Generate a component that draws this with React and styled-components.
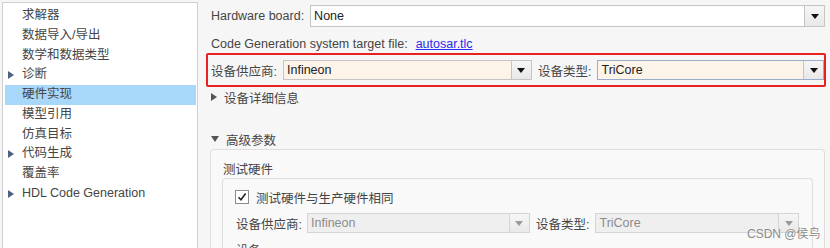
import styled, { createGlobalStyle } from "styled-components";

const GlobalStyle = createGlobalStyle`
  html, body {
    margin: 0;
    padding: 0;
    background: #f6f6f6;
  }
  body {
    font-family: "Liberation Sans", "Noto Sans CJK SC", Arial, sans-serif;
    font-size: 12.5px;
    color: #454545;
  }
`;

const Page = styled.div`
  position: relative;
  display: flex;
  width: 830px;
  height: 248px;
  overflow: hidden;
  background: #f6f6f6;
`;

const Tree = styled.div`
  width: 196px;
  margin: 2px 0 0 2px;
  padding: 3px 1px 0 2px;
  background: #fff;
  border: 1px solid #cfcfcf;
  border-bottom: none;
  box-sizing: border-box;
  flex-shrink: 0;
`;

const TreeItem = styled.div`
  position: relative;
  height: 19.75px;
  line-height: 19.75px;
  padding-left: 17px;
  white-space: nowrap;
  background: ${({ $selected }) => ($selected ? "#a7d7f9" : "transparent")};
`;

const Caret = styled.span`
  position: absolute;
  left: 3px;
  top: 6px;
  width: 0;
  height: 0;
  border-top: 4px solid transparent;
  border-bottom: 4px solid transparent;
  border-left: 6px solid #4b6382;
`;

const Pane = styled.div`
  flex: 1;
  min-width: 0;
  padding: 5px 5px 0 13px;
  display: flex;
  flex-direction: column;
  & > * {
    flex-shrink: 0;
  }
`;

const Row = styled.div`
  display: flex;
  align-items: center;
  flex-shrink: 0;
  height: ${({ $h }) => $h || 16}px;
  margin-top: ${({ $mt }) => $mt || 0}px;
  white-space: nowrap;
`;

const Label = styled.span`
  margin-left: ${({ $lead }) => $lead || 0}px;
  margin-right: ${({ $gap }) => $gap ?? 5}px;
`;

const Link = styled.a`
  margin-left: 8px;
  color: #2b2bf0;
  text-decoration: underline;
`;

const Select = styled.div`
  display: flex;
  height: ${({ $h }) => $h || 20}px;
  box-sizing: border-box;
  width: ${({ $w }) => ($w ? `${$w}px` : "auto")};
  flex: ${({ $w }) => ($w ? "none" : "1")};
  border: 1px solid ${({ $focus, $disabled }) =>
    $focus ? "#9aaccb" : $disabled ? "#d4d4d4" : "#c4c4c4"};
  background: ${({ $tone }) =>
    $tone === "warm" ? "#fcf3e9" : $tone === "off" ? "#efefef" : "#fff"};
  color: ${({ $disabled }) => ($disabled ? "#8c8c8c" : "#222")};
`;

const SelectValue = styled.span`
  flex: 1;
  padding-left: 3px;
  display: flex;
  align-items: center;
  overflow: hidden;
`;

const SelectButton = styled.span`
  width: 19px;
  border-left: 1px solid ${({ $disabled }) => ($disabled ? "#d4d4d4" : "#c4c4c4")};
  background: linear-gradient(#f6f6f6, #e8e8e8);
  display: flex;
  align-items: center;
  justify-content: center;
  &::after {
    content: "";
    width: 0;
    height: 0;
    border-left: 4px solid transparent;
    border-right: 4px solid transparent;
    border-top: 5px solid ${({ $disabled }) => ($disabled ? "#9a9a9a" : "#111")};
  }
`;

const Highlight = styled.div`
  margin: 1px -1px 0 -5px;
  padding: 5px 0 5px 3px;
  border: 2px solid #e8201f;
  border-radius: 2px;
  display: flex;
  align-items: center;
  white-space: nowrap;
`;

const Toggle = styled.span`
  display: inline-block;
  width: 0;
  height: 0;
  margin-right: 7px;
  ${({ $open }) =>
    $open
      ? `border-left: 4px solid transparent; border-right: 4px solid transparent; border-top: 6px solid #555;`
      : `border-top: 4px solid transparent; border-bottom: 4px solid transparent; border-left: 6px solid #555;`}
`;

const Group = styled.div`
  margin: 2px 0 0 -1px;
  padding: 12px 11px 0 12px;
  border: 1px solid #dedede;
  border-bottom: none;
  border-radius: 4px 4px 0 0;
  background: #f9f9f9;
  height: 120px;
`;

const GroupTitle = styled.div`
  height: 16px;
  line-height: 16px;
`;

const InnerGroup = styled.div`
  margin: 0 0 0 -1px;
  padding: 10px 12px 0 12px;
  border: 1px solid #dedede;
  border-bottom: none;
  border-radius: 4px 4px 0 0;
  height: 90px;
`;

const Check = styled.span`
  width: 14px;
  height: 14px;
  box-sizing: border-box;
  border: 1px solid #8c8c8c;
  background: #fff;
  margin-right: 7px;
  display: flex;
  align-items: center;
  justify-content: center;
`;

const Watermark = styled.div`
  position: absolute;
  left: 747px;
  top: 224px;
  font-size: 12px;
  color: #8a8a8a;
  text-shadow: 0 0 2px #fff;
`;

const treeItems = [
  { text: "求解器" },
  { text: "数据导入/导出" },
  { text: "数学和数据类型" },
  { text: "诊断", caret: true },
  { text: "硬件实现", selected: true },
  { text: "模型引用" },
  { text: "仿真目标" },
  { text: "代码生成", caret: true },
  { text: "覆盖率" },
  { text: "HDL Code Generation", caret: true },
];

const Dropdown = ({ value, width, height, tone, focus, disabled }) => (
  <Select $w={width} $h={height} $tone={tone} $focus={focus} $disabled={disabled}>
    <SelectValue>{value}</SelectValue>
    <SelectButton $disabled={disabled} />
  </Select>
);

export default function App() {
  return (
    <>
      <GlobalStyle />
      <Page>
        <Tree>
          {treeItems.map((it) => (
            <TreeItem key={it.text} $selected={it.selected}>
              {it.caret && <Caret />}
              {it.text}
            </TreeItem>
          ))}
        </Tree>
        <Pane>
          <Row $h={22}>
            <Label $gap={6}>Hardware board:</Label>
            <Dropdown value="None" height={22} />
          </Row>
          <Row $mt={9}>
            <span>Code Generation system target file:</span>
            <Link>autosar.tlc</Link>
          </Row>
          <Highlight>
            <Label $gap={6}>设备供应商:</Label>
            <Dropdown value="Infineon" width={249} tone="warm" />
            <Label $lead={6} $gap={6}>设备类型:</Label>
            <Dropdown value="TriCore" tone="warm" focus />
          </Highlight>
          <Row $mt={2}>
            <Toggle />
            设备详细信息
          </Row>
          <Row $mt={26}>
            <Toggle $open />
            高级参数
          </Row>
          <Group>
            <GroupTitle>测试硬件</GroupTitle>
            <InnerGroup>
              <Row>
                <Check>
                  <svg width="10" height="10" viewBox="0 0 10 10">
                    <path d="M1.5 5.2 L4 7.8 L8.6 1.6" fill="none" stroke="#222" strokeWidth="1.6" />
                  </svg>
                </Check>
                测试硬件与生产硬件相同
              </Row>
              <Row $h={20} $mt={8}>
                <Label $lead={1} $gap={5}>设备供应商:</Label>
                <Dropdown value="Infineon" width={223} tone="off" disabled />
                <Label $lead={6} $gap={6}>设备类型:</Label>
                <Dropdown value="TriCore" width={204} tone="off" disabled />
              </Row>
              <Row $mt={8}>
                <Label $lead={1}>设备</Label>
              </Row>
            </InnerGroup>
          </Group>
        </Pane>
        <Watermark>CSDN @侯鸟</Watermark>
      </Page>
    </>
  );
}
